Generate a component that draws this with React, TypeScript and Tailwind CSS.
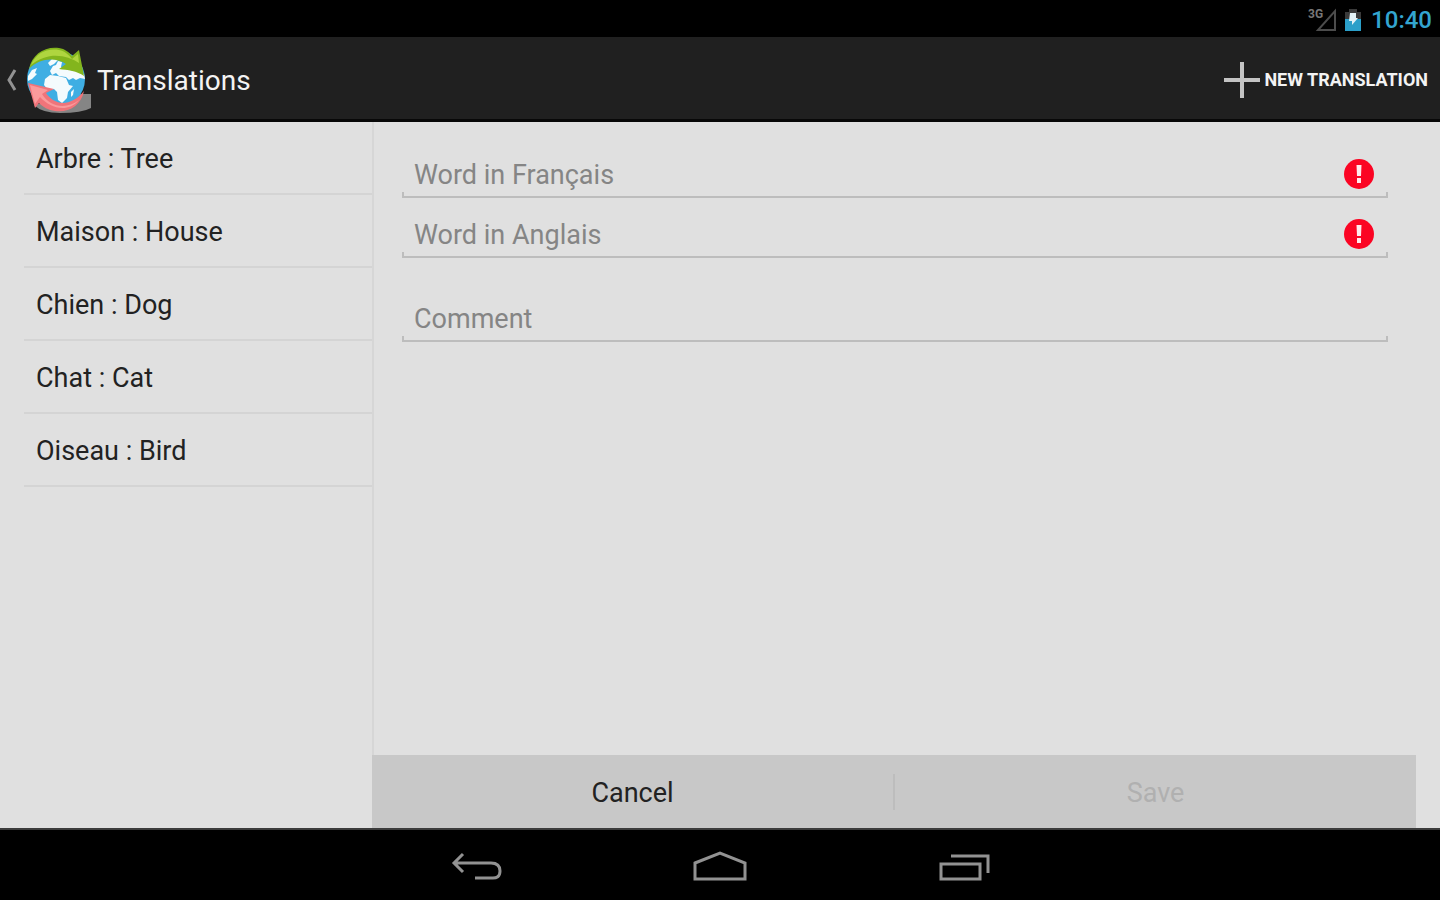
import React from "react";

const words = [
  "Arbre : Tree",
  "Maison : House",
  "Chien : Dog",
  "Chat : Cat",
  "Oiseau : Bird",
];

const StatusBar = () => {
  return (
    <div className="flex h-[37px] shrink-0 items-center justify-end bg-black pr-2 pt-0.5">
      <div className="mr-2 flex items-start">
        <span className="text-xs font-bold leading-3 text-[#777]">3G</span>
        <svg width="22" height="24" viewBox="0 0 22 24" fill="none" className="-ml-2" aria-hidden="true">
          <path d="M20 3v19H3z" stroke="#4c4c4c" strokeWidth="2" />
        </svg>
      </div>
      <svg width="16" height="22" viewBox="0 0 16 22" className="mr-2.5" aria-hidden="true">
        <path d="M4 0h8v3h4v19H0V3h4z" fill="#3a3a3a" />
        <path d="M0 10h16v12H0z" fill="#2b9fc9" />
        <path d="M5 4h6v5h2L7 16v-4H4z" fill="#e3f1f6" />
      </svg>
      <span className="text-2xl font-medium text-[#33a5d0]">10:40</span>
    </div>
  );
};

const GlobeLogo = () => {
  return (
    <svg width="68" height="68" viewBox="0 0 68 68" aria-hidden="true">
      <path d="M9 59q8 8 26 8 22 0 31-5V48H52z" fill="#858585" />
      <circle cx="31" cy="33" r="29" fill="#3faee3" />
      <path d="M3 30l4-6 5-2-2 5 2 1-5 5-4 2z" fill="#f4fbfd" />
      <path d="M23 17l4-4 6 1-4 4-4 2zM25 25l3-5 3-1 2-4 4 1-1 5 4 2 10 2 9 3 1 5-5-1-4 2-3-2-4 2-3-3-7-1-3-3-4 2z" fill="#f4fbfd" />
      <path d="M20 33l5-4 8 1 8 2 3 7 4 1-5 6-1 6-5 5-4-3-1-8-3-3-6 1-4-5z" fill="#f4fbfd" />
      <path d="M46 46l3-3-1 6-2 2z" fill="#f4fbfd" />
      <path d="M4 23C7 8 20 0 34 2c6 1 10 4 13 8l7-6 5 26c-7-5-16-6-25-7l7-5C31 11 14 12 4 23z" fill="#83b51d" />
      <path d="M6 19C11 7 22 2 34 4c6 1 10 5 13 9l6-5 1 9C42 9 23 5 6 19z" fill="#afd53f" />
      <path d="M3 37l26 6-8 4c8 12 24 15 38-2-3 15-16 22-29 20-7-1-12-4-16-8l-4 5z" fill="#f0747a" />
      <path d="M5 39l18 5-6 4c8 13 24 16 37 6-11 13-28 9-39-3l-5 7z" fill="#fa9a9c" />
    </svg>
  );
};

const ActionBar = () => {
  return (
    <header className="flex h-[85px] shrink-0 items-center justify-between border-b-3 border-b-[#080808] bg-[#202020] pl-1.5 pr-3 pt-1">
      <div className="flex items-center">
        <button aria-label="Back" className="mr-2">
          <svg width="11" height="24" viewBox="0 0 11 24" fill="none">
            <path d="M9 2L3 12l6 10" stroke="#929292" strokeWidth="3" />
          </svg>
        </button>
        <GlobeLogo />
        <h1 className="ml-1 pt-0.5 text-[28px] text-[#f3f3f3]">Translations</h1>
      </div>
      <button className="flex items-center gap-1 text-lg font-bold text-[#f3f3f3]">
        <svg width="36" height="36" viewBox="0 0 36 36" fill="none" aria-hidden="true">
          <path d="M18 0v36M0 18h36" stroke="#c4c4c4" strokeWidth="4" />
        </svg>
        NEW TRANSLATION
      </button>
    </header>
  );
};

type FieldProps = {
  label: string;
  error?: boolean;
};

const Field = ({ label, error }: FieldProps) => {
  return (
    <div className="relative flex h-12 items-center border-b-2 border-[#bdbdbd] pl-3 pr-3.5 pt-0.5">
      <input
        aria-label={label}
        placeholder={label}
        className="h-11 min-w-0 flex-1 bg-transparent pt-0.5 text-[27px] leading-10 text-[#222] outline-none placeholder:text-[#858585]"
      />
      {error && (
        <svg width="30" height="30" viewBox="0 0 30 30" role="img" aria-label="Required">
          <circle cx="15" cy="15" r="15" fill="#fb0423" />
          <path d="M12.500 6h5l-.5 11h-4zM13 19h4v5h-4z" fill="#ffe9ec" />
        </svg>
      )}
      <span className="absolute bottom-0 left-0 h-1 w-0.5 bg-[#bdbdbd]" />
      <span className="absolute bottom-0 right-0 h-1 w-0.5 bg-[#bdbdbd]" />
    </div>
  );
};

const NavBar = () => {
  return (
    <nav className="flex h-[72px] shrink-0 items-center justify-center gap-[190px] border-t-2 border-t-[#3c3c3c] bg-black pt-1">
      <button aria-label="Go back">
        <svg width="52" height="32" viewBox="0 0 52 32" fill="none" stroke="#929292" strokeWidth="3">
          <path d="M13 3L4 12l9 9M4 12h37q9 0 9 8t-9 7H25" />
        </svg>
      </button>
      <button aria-label="Home">
        <svg width="56" height="32" viewBox="0 0 56 32" fill="none" stroke="#929292" strokeWidth="3">
          <path d="M3 12L28 2l25 10v16H3z" />
        </svg>
      </button>
      <button aria-label="Recent apps">
        <svg width="52" height="32" viewBox="0 0 52 32" fill="none" stroke="#929292" strokeWidth="3">
          <path d="M3 13h39v15H3zM13 5h37v17" />
        </svg>
      </button>
    </nav>
  );
};

const App = () => {
  return (
    <div className="flex min-h-screen flex-col bg-[#e0e0e0] font-['Roboto','Liberation_Sans',sans-serif]">
      <StatusBar />
      <ActionBar />
      <div className="flex flex-1">
        <aside className="w-[372px] shrink-0 pl-6">
          <ul>
            {words.map((word) => (
              <li key={word} className="border-b-2 border-[#d4d4d4]">
                <button className="flex h-[71px] w-full items-center pl-3 pt-1 text-left text-[27px] text-[#222]">
                  {word}
                </button>
              </li>
            ))}
          </ul>
        </aside>
        <main className="flex flex-1 flex-col pr-6">
          <form className="flex flex-1 flex-col">
            <div className="flex-1 border-l-2 border-[#d6d6d6] px-7 pt-7">
              <Field label="Word in Français" error />
              <div className="mb-9 mt-3">
                <Field label="Word in Anglais" error />
              </div>
              <Field label="Comment" />
            </div>
            <div className="flex h-[73px] items-center bg-[#c8c8c8] text-[27px]">
              <button type="button" className="h-full flex-1 pt-1 text-[#222]">Cancel</button>
              <div className="h-9 w-0.5 bg-[#bdbdbd]" />
              <button type="submit" disabled className="h-full flex-1 pt-1 text-[#b0b0b0]">Save</button>
            </div>
          </form>
        </main>
      </div>
      <NavBar />
    </div>
  );
};

export default App;
